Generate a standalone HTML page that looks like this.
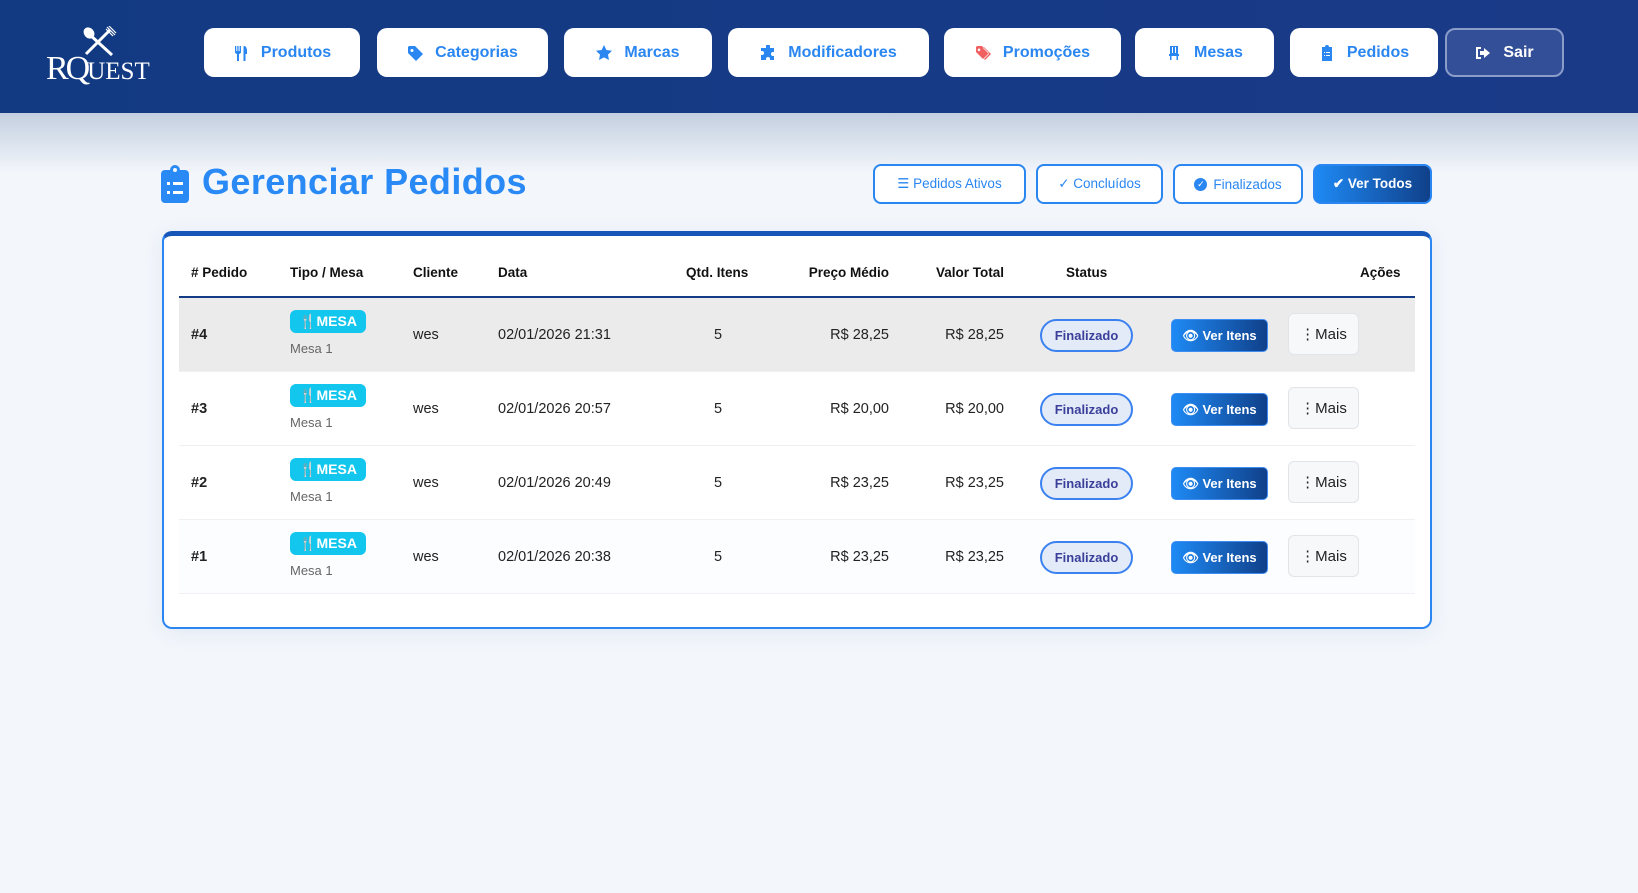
<!DOCTYPE html>
<html><head><meta charset="utf-8"><style>
*{box-sizing:border-box;margin:0;padding:0}
body{width:1638px;height:893px;overflow:hidden;background:#f3f6fb;font-family:"Liberation Sans",sans-serif;position:relative}
.hdr{position:absolute;left:0;top:0;width:1638px;height:113px;background:linear-gradient(90deg,#123a82,#1a3a88);}
.shade{position:absolute;left:0;top:113px;width:1638px;height:60px;background:linear-gradient(#c3cfe0,#f3f6fb)}
.nb{position:absolute;top:28px;height:49px;background:#fff;border-radius:10px;color:#2a86f0;font-weight:bold;font-size:16px;display:flex;align-items:center;justify-content:center;gap:12px}
.nb svg{width:16px;height:16px}
.sair{background:#334f98;border:2px solid #8a9cc8;color:#fff}
.title{position:absolute;left:202px;top:161px;font-size:36px;font-weight:bold;color:#2a8af5;letter-spacing:0.4px}
.fb{position:absolute;top:164px;height:40px;border:2px solid #2a86f0;border-radius:8px;background:#fff;color:#2a86f0;font-size:13.5px;display:flex;align-items:center;justify-content:center;gap:6px}
.card{position:absolute;left:162px;top:231px;width:1270px;height:398px;background:#fff;border:2px solid #2a86f0;border-top:5px solid #1556b8;border-radius:10px;box-shadow:0 4px 20px rgba(40,80,160,.08)}
.t{position:absolute;font-size:14.5px;color:#222;white-space:nowrap}
.th{font-weight:bold;font-size:13.5px;color:#111}
.row{position:absolute;left:179px;width:1236px;height:74px;border-bottom:1px solid #eef0f3}
.badge{position:absolute;width:76px;height:23px;background:#12c6ee;border-radius:6px;color:#fff;font-weight:bold;font-size:14px;display:flex;align-items:center;justify-content:center;gap:3px}
.pill{position:absolute;width:93px;height:33px;border:2px solid #3b82f0;border-radius:17px;background:#e3ebf8;color:#3a3f9a;font-weight:bold;font-size:13px;display:flex;align-items:center;justify-content:center}
.ver{position:absolute;width:97px;height:33px;border-radius:5px;background:linear-gradient(90deg,#1e8af5,#10408a);color:#fff;font-weight:bold;font-size:13px;display:flex;align-items:center;justify-content:center;gap:5px;border:1px solid #3d8df2}
.mais{position:absolute;width:71px;height:42px;border:1px solid #e1e4e9;border-radius:6px;background:#f7f8fa;color:#222;font-size:15px;display:flex;align-items:center;justify-content:center}
</style></head><body>
<div class="hdr"></div>
<div class="shade"></div>
<svg style="position:absolute;left:80px;top:26px" width="38" height="32" viewBox="0 0 38 32"><line x1="6" y1="28" x2="30" y2="4" stroke="#fff" stroke-width="3"/><line x1="9" y1="8" x2="32" y2="29" stroke="#fff" stroke-width="3"/><ellipse cx="9" cy="7" rx="5" ry="6" fill="#fff" transform="rotate(-40 9 7)"/><path d="M27 1l8 8M29 0l7 7M26 3l7 7" stroke="#fff" stroke-width="1.2"/></svg>
<div style="position:absolute;left:46px;top:50px;color:#fff;font-family:'Liberation Serif',serif;font-size:34px;line-height:38px;letter-spacing:-3px">RQ<span style="font-size:25px;letter-spacing:0px">UEST</span></div>
<div class="nb" style="left:204px;width:156px"><svg viewBox="0 0 16 16" fill="#2a86f0"><path d="M2 1h1.3v5h1V1h1.3v5h1V1H8v6c0 1-1 2-2 2v7H4V9C3 9 2 8 2 7z M11 1c2 0 3 2 3 5v3h-1.5v7H10.5V3c0-1 0-2 .5-2z"/></svg>Produtos</div>
<div class="nb" style="left:377px;width:171px"><svg viewBox="0 0 16 16" fill="#2a86f0"><path d="M1 2v6l8 8 7-7-8-8H2zm4 2a1.5 1.5 0 110 3 1.5 1.5 0 010-3z"/></svg>Categorias</div>
<div class="nb" style="left:564px;width:148px"><svg viewBox="0 0 16 16" fill="#2a86f0"><path d="M8 0l2.4 5 5.6.7-4 3.9 1 5.4L8 12.4 3 15l1-5.4-4-3.9L5.6 5z"/></svg>Marcas</div>
<div class="nb" style="left:728px;width:201px"><svg viewBox="0 0 16 16" fill="#2a86f0"><path d="M6 1a2 2 0 014 0v2h4v4h-1a2 2 0 000 4h1v4H10v-1a2 2 0 00-4 0v1H1v-5h1a2 2 0 000-4H1V3h5z"/></svg>Modificadores</div>
<div class="nb" style="left:944px;width:177px"><svg viewBox="0 0 16 16" fill="#f06060"><path d="M1 2v5l7 7 6-6-7-7H2zm3 1.5a1.3 1.3 0 110 2.6 1.3 1.3 0 010-2.6zM9 2l7 7-6 6-1-1 5-5-6-6z"/></svg>Promoções</div>
<div class="nb" style="left:1135px;width:139px"><svg viewBox="0 0 16 16" fill="#2a86f0"><path d="M4 1h8v8H4zm2 1v6h1V2zm3 0v6h1V2zM3 9h10v2H3zm1 2h1.5v4H4zm6.5 0H12v4h-1.5z"/></svg>Mesas</div>
<div class="nb" style="left:1290px;width:148px"><svg viewBox="0 0 16 16" fill="#2a86f0"><path d="M3 2h3a2 2 0 014 0h3v14H3z"/><path d="M5 7h1v1H5zm2 0h4v1H7zm-2 3h1v1H5zm2 0h4v1H7z" fill="#fff"/></svg>Pedidos</div>
<div class="nb sair" style="left:1445px;width:119px;color:#fff"><svg viewBox="0 0 16 16" fill="#fff"><path d="M1 2h5v2H3v8h3v2H1zm8 1l6 5-6 5v-3H5V6h4z"/></svg>Sair</div>

<svg style="position:absolute;left:161px;top:165px" width="28" height="38" viewBox="0 0 28 38"><rect x="0" y="5" width="28" height="33" rx="4" fill="#2a8af5"/><circle cx="14" cy="5" r="5" fill="#2a8af5"/><circle cx="14" cy="5" r="2" fill="#f3f6fb"/><rect x="6" y="17" width="3" height="3" fill="#fff"/><rect x="12" y="17" width="10" height="3" fill="#fff"/><rect x="6" y="26" width="3" height="3" fill="#fff"/><rect x="12" y="26" width="10" height="3" fill="#fff"/></svg>
<div class="title">Gerenciar Pedidos</div>

<div class="fb" style="left:873px;width:153px">☰ Pedidos Ativos</div>
<div class="fb" style="left:1036px;width:127px">✓ Concluídos</div>
<div class="fb" style="left:1173px;width:130px"><span style="display:inline-block;width:13px;height:13px;border-radius:50%;background:#2a86f0;color:#fff;font-size:9px;line-height:13px;text-align:center">✓</span>Finalizados</div>
<div class="fb" style="left:1313px;width:119px;background:linear-gradient(90deg,#1e8af5,#10408a);color:#fff;font-weight:bold">✔ Ver Todos</div>

<div class="card"></div>
<div class="t th" style="left:191px;top:265px">#&nbsp;Pedido</div>
<div class="t th" style="left:290px;top:265px">Tipo / Mesa</div>
<div class="t th" style="left:413px;top:265px">Cliente</div>
<div class="t th" style="left:498px;top:265px">Data</div>
<div class="t th" style="left:686px;top:265px">Qtd. Itens</div>
<div class="t th" style="left:789px;top:265px;width:100px;text-align:right">Preço Médio</div>
<div class="t th" style="left:904px;top:265px;width:100px;text-align:right">Valor Total</div>
<div class="t th" style="left:1066px;top:265px">Status</div>
<div class="t th" style="left:1360px;top:265px">Ações</div>
<div style="position:absolute;left:179px;top:296px;width:1236px;height:2px;background:#143c86"></div>

<div class="row" style="top:298px;background:#ebebeb"></div>
<div class="row" style="top:372px"></div>
<div class="row" style="top:446px"></div>
<div class="row" style="top:520px;background:#fcfdfe"></div>

<div class="t" style="left:191px;top:327px;font-weight:bold">#4</div>
<div class="badge" style="left:290px;top:310px">🍴MESA</div><div class="t" style="left:290px;top:341px;font-size:13px;color:#666">Mesa 1</div>
<div class="t" style="left:413px;top:327px">wes</div><div class="t" style="left:498px;top:327px">02/01/2026 21:31</div>
<div class="t" style="left:714px;top:327px">5</div>
<div class="t" style="left:789px;top:327px;width:100px;text-align:right">R$ 28,25</div>
<div class="t" style="left:904px;top:327px;width:100px;text-align:right">R$ 28,25</div>
<div class="pill" style="left:1040px;top:319px">Finalizado</div><div class="ver" style="left:1171px;top:319px">👁 Ver Itens</div><div class="mais" style="left:1288px;top:313px">⋮Mais</div>

<div class="t" style="left:191px;top:401px;font-weight:bold">#3</div>
<div class="badge" style="left:290px;top:384px">🍴MESA</div><div class="t" style="left:290px;top:415px;font-size:13px;color:#666">Mesa 1</div>
<div class="t" style="left:413px;top:401px">wes</div><div class="t" style="left:498px;top:401px">02/01/2026 20:57</div>
<div class="t" style="left:714px;top:401px">5</div>
<div class="t" style="left:789px;top:401px;width:100px;text-align:right">R$ 20,00</div>
<div class="t" style="left:904px;top:401px;width:100px;text-align:right">R$ 20,00</div>
<div class="pill" style="left:1040px;top:393px">Finalizado</div><div class="ver" style="left:1171px;top:393px">👁 Ver Itens</div><div class="mais" style="left:1288px;top:387px">⋮Mais</div>

<div class="t" style="left:191px;top:475px;font-weight:bold">#2</div>
<div class="badge" style="left:290px;top:458px">🍴MESA</div><div class="t" style="left:290px;top:489px;font-size:13px;color:#666">Mesa 1</div>
<div class="t" style="left:413px;top:475px">wes</div><div class="t" style="left:498px;top:475px">02/01/2026 20:49</div>
<div class="t" style="left:714px;top:475px">5</div>
<div class="t" style="left:789px;top:475px;width:100px;text-align:right">R$ 23,25</div>
<div class="t" style="left:904px;top:475px;width:100px;text-align:right">R$ 23,25</div>
<div class="pill" style="left:1040px;top:467px">Finalizado</div><div class="ver" style="left:1171px;top:467px">👁 Ver Itens</div><div class="mais" style="left:1288px;top:461px">⋮Mais</div>

<div class="t" style="left:191px;top:549px;font-weight:bold">#1</div>
<div class="badge" style="left:290px;top:532px">🍴MESA</div><div class="t" style="left:290px;top:563px;font-size:13px;color:#666">Mesa 1</div>
<div class="t" style="left:413px;top:549px">wes</div><div class="t" style="left:498px;top:549px">02/01/2026 20:38</div>
<div class="t" style="left:714px;top:549px">5</div>
<div class="t" style="left:789px;top:549px;width:100px;text-align:right">R$ 23,25</div>
<div class="t" style="left:904px;top:549px;width:100px;text-align:right">R$ 23,25</div>
<div class="pill" style="left:1040px;top:541px">Finalizado</div><div class="ver" style="left:1171px;top:541px">👁 Ver Itens</div><div class="mais" style="left:1288px;top:535px">⋮Mais</div>
</body></html>
